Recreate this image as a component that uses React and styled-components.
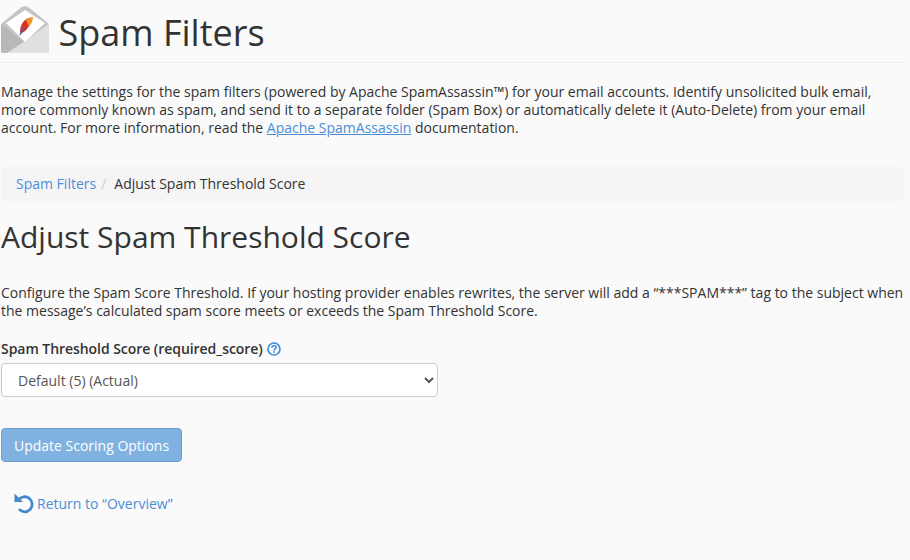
import React from "react";
import styled, { createGlobalStyle } from "styled-components";

const GlobalStyle = createGlobalStyle`
  html, body {
    margin: 0;
    padding: 0;
    background: #fafafa;
  }
  body {
    font-family: "Open Sans", "Liberation Sans", sans-serif;
    font-size: 14px;
    line-height: 18.2px;
    color: #333;
  }
`;

const Page = styled.div`
  width: 903px;
  height: 560px;
  margin-left: 1px;
  overflow: hidden;
`;

const Header = styled.header`
  display: flex;
  align-items: flex-start;
  gap: 9.5px;
  height: 57px;
  padding-top: 5px;
  border-bottom: 1px solid #eee;
`;

const PageTitle = styled.h1`
  margin: 5px 0 0;
  font-size: 36px;
  line-height: 46px;
  font-weight: 400;
  color: #333;
`;

const Intro = styled.p`
  margin: 20px 0 29px;
  width: 890px;
`;

const Crumbs = styled.nav`
  display: flex;
  align-items: center;
  height: 34px;
  padding: 0 15px;
  background: #f5f5f5;
  border-radius: 4px;
`;

const CrumbSep = styled.span`
  color: #ccc;
  padding: 0 8px 0 5px;
`;

const Link = styled.a`
  color: #4a8fd6;
  text-decoration: ${(p) => (p.$underline ? "underline" : "none")};
  cursor: pointer;
`;

const SectionTitle = styled.h2`
  margin: 16px 0 0;
  font-size: 30px;
  line-height: 39px;
  font-weight: 400;
  color: #333;
`;

const Description = styled.p`
  margin: 28px 0 0;
`;

const Field = styled.div`
  margin-top: 20px;
  width: 437px;
`;

const Label = styled.label`
  display: flex;
  align-items: center;
  gap: 4px;
  font-weight: 600;
  letter-spacing: -0.05px;
  margin-bottom: 5px;
`;

const Select = styled.select`
  display: block;
  width: 100%;
  height: 34px;
  padding: 6px 12px;
  font-family: inherit;
  font-size: 14px;
  color: #555;
  background: #fff;
  border: 1px solid #ccc;
  border-radius: 4px;
`;

const SubmitButton = styled.button`
  display: block;
  margin-top: 31px;
  width: 181px;
  height: 34px;
  padding: 0;
  font-family: inherit;
  font-size: 14px;
  color: #fff;
  background: #7fb2e0;
  border: 1px solid #6f9fd0;
  border-radius: 4px;
`;

const ReturnRow = styled.div`
  display: flex;
  align-items: center;
  margin-top: 30px;
  padding-left: 12px;
`;

const EnvelopeIcon = () => (
  <svg width="48" height="48" viewBox="0 0 48 48" style={{ flex: "none" }}>
    <path d="M0 19 L20 2.5 Q24 0 28 2.5 L48 19 L48 46 Q48 48 46 48 L2 48 Q0 48 0 46 Z" fill="#c4c4c4" />
    <path d="M5 18 L24 5 L44 18 L24 37 Z" fill="#fff" />
    <path d="M0 19 L23 37 L6 48 L2 48 Q0 48 0 46 Z" fill="#b8b8b8" />
    <path d="M48 19 L48 46 Q48 48 46 48 L6 48 L24 36 Z" fill="#e0e0e0" />
    <path d="M19 27 C19 20 23 14 28 13 C30 19 27 25 21 28 Z" fill="#d8352a" />
    <path d="M25 15 C27 13 29 12 32 12 C32 16 30 19 28 22 Z" fill="#f0932b" />
    <path d="M19 30 L23 22" stroke="#5a5aa8" strokeWidth="1.5" fill="none" />
  </svg>
);

const HelpIcon = () => (
  <svg width="14" height="14" viewBox="0 0 14 14">
    <circle cx="7" cy="7" r="6" fill="none" stroke="#3d8fd9" strokeWidth="1.7" />
    <path d="M4.9 5.7 C4.9 3.2 9.2 3.2 9.2 5.5 C9.2 7 7 6.8 7 8.4" fill="none" stroke="#3d8fd9" strokeWidth="1.6" />
    <rect x="6.2" y="9.2" width="1.6" height="1.6" fill="#3d8fd9" />
  </svg>
);

const UndoIcon = () => (
  <svg width="24" height="24" viewBox="0 0 24 24">
    <path d="M5.5 8 A7.5 7.5 0 1 1 6 17.2" fill="none" stroke="#428bca" strokeWidth="2.8" />
    <path d="M1.5 1.5 L1.5 10 L10 10 Z" fill="#428bca" />
  </svg>
);

export default function App() {
  return (
    <Page>
      <GlobalStyle />
      <Header>
        <EnvelopeIcon />
        <PageTitle>Spam Filters</PageTitle>
      </Header>
      <Intro>
        Manage the settings for the spam filters (powered by Apache SpamAssassin™) for your email accounts. Identify unsolicited bulk email, more commonly known as spam, and send it to a separate folder (Spam Box) or automatically delete it (Auto-Delete) from your email account. For more information, read the{" "}
        <Link $underline>Apache SpamAssassin</Link> documentation.
      </Intro>
      <Crumbs>
        <Link>Spam Filters</Link>
        <CrumbSep>/</CrumbSep>
        <span>Adjust Spam Threshold Score</span>
      </Crumbs>
      <SectionTitle>Adjust Spam Threshold Score</SectionTitle>
      <Description>
        Configure the Spam Score Threshold. If your hosting provider enables rewrites, the server will add a “***SPAM***” tag to the subject when the message’s calculated spam score meets or exceeds the Spam Threshold Score.
      </Description>
      <Field>
        <Label>
          Spam Threshold Score (required_score) <HelpIcon />
        </Label>
        <Select defaultValue="5">
          <option value="5">Default (5) (Actual)</option>
        </Select>
      </Field>
      <SubmitButton disabled>Update Scoring Options</SubmitButton>
      <ReturnRow>
        <UndoIcon />
        <Link>Return to “Overview”</Link>
      </ReturnRow>
    </Page>
  );
}
